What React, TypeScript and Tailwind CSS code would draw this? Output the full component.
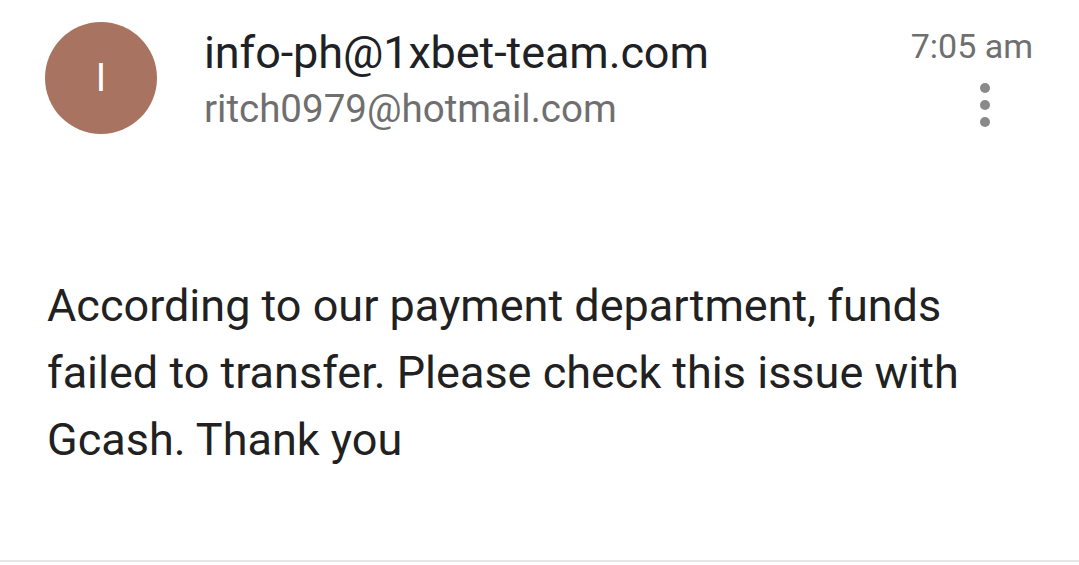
import React from "react";

const font = { fontFamily: "Roboto, 'Noto Sans', Arial, sans-serif" };

function MoreVert() {
  return (
    <div className="flex flex-col items-center gap-[7px]">
      <span className="block h-[10px] w-[10px] rounded-full bg-[#8a8a8a]" />
      <span className="block h-[10px] w-[10px] rounded-full bg-[#8a8a8a]" />
      <span className="block h-[10px] w-[10px] rounded-full bg-[#8a8a8a]" />
    </div>
  );
}

export default function App() {
  return (
    <div
      className="h-[565px] w-[1079px] overflow-hidden bg-white"
      style={font}
    >
      <div className="h-[562px] border-b-2 border-[#e6e6e6]">
        {/* Header */}
        <div className="flex pl-[45px] pr-[46px]">
          <div className="mt-[22px] flex h-[112px] w-[112px] shrink-0 items-center justify-center rounded-full bg-[#a87360]">
            <span className="text-[38px] font-normal leading-none text-white">I</span>
          </div>
          <div className="ml-[47px] flex min-w-0 flex-1 flex-col">
            <div className="mt-[26px] text-[45px] leading-[54px] tracking-[-0.1px] text-[#202124]">
              info-ph@1xbet-team.com
            </div>
            <div className="mt-[6px] text-[38.5px] leading-[46px] text-[#6f6f6f]">
              ritch0979@hotmail.com
            </div>
          </div>
          <div className="flex flex-col items-end">
            <div className="mt-[26px] text-[34px] leading-[40px] text-[#6f6f6f]">
              7:05 am
            </div>
            <div className="mr-[43px] mt-[17px]">
              <MoreVert />
            </div>
          </div>
        </div>

        {/* Body */}
        <div className="mt-[138px] w-[1000px] pl-[47px] text-[45px] leading-[67px] text-[#212121]">
          According to our payment department, funds failed to transfer. Please
          check this issue with Gcash. Thank you
        </div>
      </div>
    </div>
  );
}
